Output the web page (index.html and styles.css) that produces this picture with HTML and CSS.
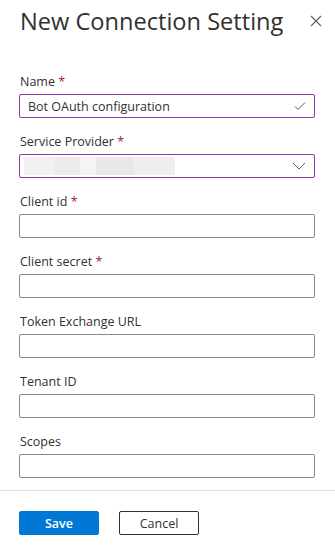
FILE: index.html
```html
<!DOCTYPE html>
<html lang="en">
<head>
  <meta charset="UTF-8">
  <title>New Connection Setting</title>
  <link rel="stylesheet" href="styles.css">
</head>
<body>

  <div class="panel">
    <div class="header">
      <h1>New Connection Setting</h1>
      <button class="close" aria-label="Close">
        <svg width="12" height="12" viewBox="0 0 12 12"><path d="M1 1L11 11M11 1L1 11" stroke="#605e5c" stroke-width="1.1" fill="none"/></svg>
      </button>
    </div>

    <form class="form">
      <div class="field">
        <label>Name <span class="req">*</span></label>
        <div class="box valid">
          <span class="value">Bot OAuth configuration</span>
          <svg class="icon" width="12" height="10" viewBox="0 0 12 10"><path d="M1 5.5L4 8.5L11 1.5" stroke="#605e5c" stroke-width="1" fill="none"/></svg>
        </div>
      </div>

      <div class="field">
        <label>Service Provider <span class="req">*</span></label>
        <div class="box valid">
          <span class="blur">
            <i style="width:30px;background:#f1f1f1"></i>
            <i style="width:26px;background:#ececec"></i>
            <i style="width:16px;background:#f4f4f4"></i>
            <i style="width:38px;background:#e8e8e8"></i>
            <i style="width:41px;background:#efefef"></i>
          </span>
          <svg class="icon" width="14" height="8" viewBox="0 0 14 8"><path d="M1 1L7 7L13 1" stroke="#605e5c" stroke-width="1" fill="none"/></svg>
        </div>
      </div>

      <div class="field">
        <label>Client id <span class="req">*</span></label>
        <div class="box"></div>
      </div>

      <div class="field">
        <label>Client secret <span class="req">*</span></label>
        <div class="box"></div>
      </div>

      <div class="field">
        <label>Token Exchange URL</label>
        <div class="box"></div>
      </div>

      <div class="field">
        <label>Tenant ID</label>
        <div class="box"></div>
      </div>

      <div class="field">
        <label>Scopes</label>
        <div class="box"></div>
      </div>
    </form>

    <div class="footer">
      <button class="btn primary">Save</button>
      <button class="btn">Cancel</button>
    </div>
  </div>

</body>
</html>
```

FILE: styles.css
```css
:root {
  --texto: #323130;
  --gris: #8a8886;
  --morado: #8a3aa8;
  --rojo: #a4262c;
  --azul: #0078d4;
}

body {
  margin: 0;
  background: white;
  color: var(--texto);
  font-family: 'Open Sans', 'Noto Sans', sans-serif;
}

.panel {
  width: 335px;
}

.header {
  display: flex;
  align-items: flex-start;
  justify-content: space-between;
  padding: 5px 13px 0 20px;
}

h1 {
  margin: 0;
  font-size: 23.6px;
  font-weight: 400;
  line-height: 32px;
}

.close {
  background: none;
  border: none;
  padding: 0;
  margin-top: 10px;
  width: 12px;
  height: 12px;
  cursor: pointer;
}

.form {
  padding: 35px 20px 0 19px;
}

.field {
  margin-bottom: 14px;
}

.field:last-child {
  margin-bottom: 12px;
}

label {
  display: block;
  font-size: 12.5px;
  line-height: 20px;
  margin-bottom: 2px;
  padding-left: 1px;
}

.req {
  color: var(--rojo);
}

.box {
  box-sizing: border-box;
  height: 24px;
  border: 1px solid var(--gris);
  border-radius: 2px;
  display: flex;
  align-items: center;
  justify-content: space-between;
  padding: 0 8px 0 8px;
  font-size: 12.5px;
}

.box.valid {
  border-color: var(--morado);
}

.blur {
  display: flex;
  height: 18px;
  margin-left: -4px;
}

.blur i {
  display: block;
  height: 100%;
}

.footer {
  border-top: 1px solid #e1dfdd;
  padding: 20px 19px;
  display: flex;
  gap: 20px;
}

.btn {
  box-sizing: border-box;
  width: 80px;
  height: 24px;
  border: 1px solid var(--texto);
  border-radius: 2px;
  background: white;
  color: var(--texto);
  font-family: inherit;
  font-size: 12.5px;
  padding: 0;
  cursor: pointer;
}

.btn.primary {
  background: var(--azul);
  border-color: var(--azul);
  color: white;
  font-weight: 600;
}
```
